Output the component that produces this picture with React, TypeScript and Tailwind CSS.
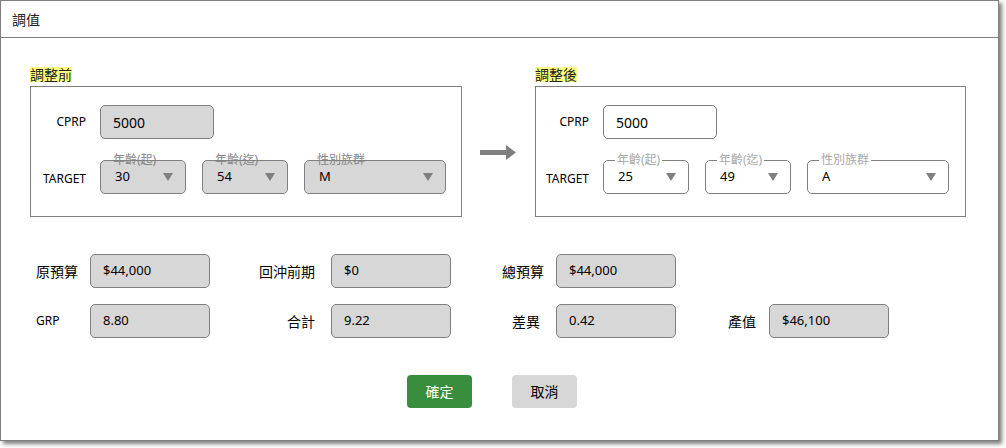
import React from "react";

const FONT = "[font-family:'Noto_Sans','Noto_Sans_CJK_TC',sans-serif]";

type SelectProps = {
  label: string;
  value: string;
  width: string;
  disabled?: boolean;
};

function Select({ label, value, width, disabled }: SelectProps) {
  return (
    <div
      className={`relative h-[34px] ${width} rounded-[5px] border border-[#7f7f7f] flex items-center pl-[14px] text-[13px] text-black ${
        disabled ? "bg-[#d7d7d7]" : "bg-white"
      }`}
    >
      {disabled ? (
        <span className="absolute left-[12px] -top-[9px] text-[12px] leading-[16px] text-[#858585]">
          {label}
        </span>
      ) : (
        <span className="absolute left-[11px] -top-[9px] px-[2px] bg-white text-[12px] leading-[16px] text-[#a8a8a8]">
          {label}
        </span>
      )}
      <span>{value}</span>
      <svg className="absolute right-[12px] top-[12px]" width="10" height="8" viewBox="0 0 10 8">
        <polygon points="0,0 10,0 5,8" fill="#7f7f7f" />
      </svg>
    </div>
  );
}

type PanelProps = {
  title: string;
  boxW: string;
  labelW: string;
  disabled?: boolean;
  cprp: string;
  from: string;
  to: string;
  group: string;
};

function Panel({ title, boxW, labelW, disabled, cprp, from, to, group }: PanelProps) {
  return (
    <div className="flex flex-col items-start">
      <span className="h-[15px] leading-[15px] text-[14px] bg-[#ffff80] text-[#222]">{title}</span>
      <div className={`mt-[4px] ${boxW} h-[131px] border border-[#7f7f7f] pt-[18px]`}>
        <div className="flex items-center">
          <div className={`${labelW} text-right text-[12px]`}>CPRP</div>
          <div
            className={`ml-[14px] w-[114px] h-[34px] rounded-[5px] border border-[#7f7f7f] flex items-center pl-[12px] text-[14px] ${
              disabled ? "bg-[#d7d7d7]" : "bg-white"
            }`}
          >
            {cprp}
          </div>
        </div>
        <div className="flex items-center mt-[21px]">
          <div className={`${labelW} text-right text-[12px] pt-[3px]`}>TARGET</div>
          <div className="ml-[14px] flex gap-[16px]">
            <Select label="年齡(起)" value={from} width="w-[86px]" disabled={disabled} />
            <Select label="年齡(迄)" value={to} width="w-[86px]" disabled={disabled} />
            <Select label="性別族群" value={group} width="w-[142px]" disabled={disabled} />
          </div>
        </div>
      </div>
    </div>
  );
}

function Field({ value }: { value: string }) {
  return (
    <div className="w-[120px] h-[34px] rounded-[5px] border border-[#7f7f7f] bg-[#d7d7d7] flex items-center pl-[12px] text-[13px]">
      {value}
    </div>
  );
}

export default function App() {
  return (
    <div className={`w-[1006px] h-[448px] bg-white text-black ${FONT}`}>
      <div className="w-[999px] h-[441px] border border-[#7f7f7f] bg-white shadow-[3px_3px_4px_rgba(0,0,0,0.5)] flex flex-col">
        {/* ── Header ── */}
        <div className="h-[37px] border-b border-[#7f7f7f] flex items-center pl-[11px] text-[14px] text-[#222]">
          調值
        </div>

        <div className="pl-[29px] pt-[29px]">
          {/* ── Before / after ── */}
          <div className="flex items-start">
            <Panel
              title="調整前"
              boxW="w-[432px]"
              labelW="w-[55px]"
              disabled
              cprp="5000"
              from="30"
              to="54"
              group="M"
            />
            <svg className="mt-[78px] ml-[18px] mr-[19px]" width="36" height="15" viewBox="0 0 36 15">
              <rect x="0" y="5" width="27" height="5" fill="#7f7f7f" />
              <polygon points="26,0 36,7.5 26,15" fill="#7f7f7f" />
            </svg>
            <Panel
              title="調整後"
              boxW="w-[431px]"
              labelW="w-[53px]"
              cprp="5000"
              from="25"
              to="49"
              group="A"
            />
          </div>

          {/* ── Totals ── */}
          <div className="mt-[37px] flex items-center">
            <div className="w-[60px] pl-[6px] text-[14px]">原預算</div>
            <Field value="$44,000" />
            <div className="w-[121px] pr-[16px] text-right text-[14px]">回沖前期</div>
            <Field value="$0" />
            <div className="w-[105px] pr-[12px] text-right text-[14px]">總預算</div>
            <Field value="$44,000" />
          </div>
          <div className="mt-[16px] flex items-center">
            <div className="w-[60px] pl-[6px] text-[12px]">GRP</div>
            <Field value="8.80" />
            <div className="w-[121px] pr-[16px] text-right text-[14px]">合計</div>
            <Field value="9.22" />
            <div className="w-[105px] pr-[16px] text-right text-[14px]">差異</div>
            <Field value="0.42" />
            <div className="w-[93px] pr-[13px] text-right text-[14px]">產值</div>
            <Field value="$46,100" />
          </div>

          {/* ── Actions ── */}
          <div className="mt-[37px] ml-[377px] flex gap-[40px]">
            <button className="w-[65px] h-[33px] rounded-[4px] bg-[#388e3c] text-white text-[14px]">
              確定
            </button>
            <button className="w-[65px] h-[33px] rounded-[4px] bg-[#d7d7d7] text-black text-[14px]">
              取消
            </button>
          </div>
        </div>
      </div>
    </div>
  );
}
